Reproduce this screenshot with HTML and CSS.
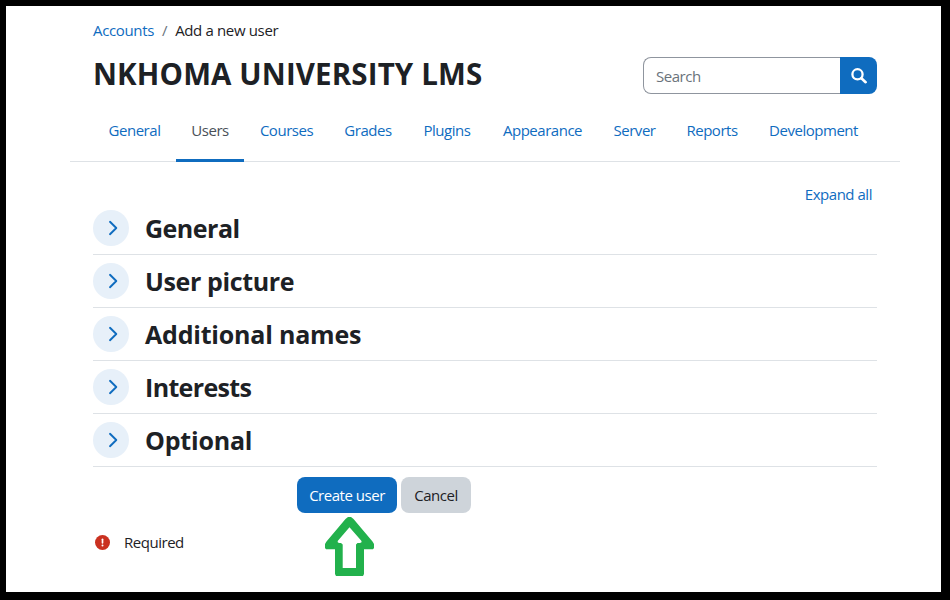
FILE: index.html
```html
<!DOCTYPE html>
<html lang="en">
<head>
<meta charset="utf-8">
<title>Add a new user</title>
<link rel="stylesheet" href="styles.css">
</head>
<body>
<main class="page">
  <nav class="breadcrumb"><a class="crumb-link">Accounts</a><span class="slash">/</span><span class="crumb-current">Add a new user</span></nav>
  <header class="header">
    <h1>NKHOMA UNIVERSITY LMS</h1>
    <div class="search">
      <div class="search-field"><span>Search</span></div>
      <button class="search-button" aria-label="Search"><svg width="16" height="16" viewBox="0 0 16 16"><circle cx="6.5" cy="6.3" r="5.1" fill="none" stroke="#fff" stroke-width="2.3"/><path d="M10.4 10.2L14.6 14.2" stroke="#fff" stroke-width="2.6" stroke-linecap="round"/></svg></button>
    </div>
  </header>
  <nav class="tabs">
    <a class="tab t-general"><span>General</span></a>
    <a class="tab t-users active"><span>Users</span></a>
    <a class="tab t-courses"><span>Courses</span></a>
    <a class="tab t-grades"><span>Grades</span></a>
    <a class="tab t-plugins"><span>Plugins</span></a>
    <a class="tab t-appearance"><span>Appearance</span></a>
    <a class="tab t-server"><span>Server</span></a>
    <a class="tab t-reports"><span>Reports</span></a>
    <a class="tab t-development"><span>Development</span></a>
  </nav>
  <div class="expand"><a>Expand all</a></div>
  <section class="row"><span class="toggle"><svg width="36" height="36"><path d="M17 11.8L23.3 18L17 24.2"/></svg></span><h3 class="h-general">General</h3></section>
  <section class="row"><span class="toggle"><svg width="36" height="36"><path d="M17 11.8L23.3 18L17 24.2"/></svg></span><h3 class="h-picture">User picture</h3></section>
  <section class="row"><span class="toggle"><svg width="36" height="36"><path d="M17 11.8L23.3 18L17 24.2"/></svg></span><h3 class="h-names">Additional names</h3></section>
  <section class="row"><span class="toggle"><svg width="36" height="36"><path d="M17 11.8L23.3 18L17 24.2"/></svg></span><h3 class="h-interests">Interests</h3></section>
  <section class="row"><span class="toggle"><svg width="36" height="36"><path d="M17 11.8L23.3 18L17 24.2"/></svg></span><h3 class="h-optional">Optional</h3></section>
  <div class="actions">
    <button class="btn primary">Create user</button>
    <button class="btn secondary">Cancel</button>
    <svg class="arrow" width="50" height="60" viewBox="0 0 50 60"><path d="M23 0H26L28.500 2L47.500 24.500L49 27V31L48 32.300H39V57L38 59H11L10 57V32.300H1L0 31V27L1.500 24.500L20.500 2ZM24.500 10.300L12.700 24V25.300L14 26H16L17.700 27.500V51H31V27.500L32.500 26H35L36.500 25.300V24Z" fill="#22b14c" fill-rule="evenodd"/></svg>
  </div>
  <div class="required"><svg width="15" height="15" viewBox="0 0 15 15"><circle cx="7.5" cy="7.5" r="7.5" fill="#ca3120"/><path d="M7.5 4.3V7.8" stroke="#fff" stroke-width="1.7" stroke-linecap="round"/><circle cx="7.5" cy="10.5" r="1" fill="#fff"/></svg><span>Required</span></div>
</main>
</body>
</html>
```

FILE: styles.css
```css
* { box-sizing: border-box; }
body {
  margin: 0;
  width: 950px;
  height: 600px;
  overflow: hidden;
  background: #000;
  padding: 6px 9px 8px 6px;
  font-family: "Open Sans", "Noto Sans", sans-serif;
  font-size: 15px;
  letter-spacing: -0.47px;
  line-height: 24px;
  color: #1d2125;
}
.page { height: 586px; background: #fff; padding: 12px 64px 0 87px; }
a { color: #0f6cbf; }
.breadcrumb { height: 25px; display: flex; white-space: nowrap; letter-spacing: -0.35px; }
.slash { color: #6a737b; margin: 0 8px; }
.header { display: flex; justify-content: space-between; height: 62px; }
h1 { margin: 13px 0 0; font-size: 29.5px; line-height: 36px; font-weight: 700; white-space: nowrap; letter-spacing: 0.13px; }
.search { display: flex; width: 234px; height: 37px; margin-top: 14px; }
.search-field {
  flex: 1;
  border: 1px solid #8f959e;
  border-right: 0;
  border-radius: 8px 0 0 8px;
  padding: 6px 12px;
  color: #6a737b;
}
.search-button {
  width: 37px;
  border: 0;
  border-radius: 0 8px 8px 0;
  background: #0f6cbf;
  padding: 0;
  display: flex;
  align-items: center;
  justify-content: center;
}
.tabs {
  display: flex;
  margin: 0 -23px;
  padding-left: 23px;
  height: 57px;
  border-bottom: 1px solid #dee2e6;
}
.tab {
  display: flex;
  justify-content: center;
  height: 57px;
  padding-top: 13px;
  white-space: nowrap;
}
.active { color: #495057; border-bottom: 3px solid #0f6cbf; }
.t-general { width: 83px; }
.t-users { width: 68px; }
.t-courses { width: 85px; }
.t-grades { width: 78px; }
.t-plugins { width: 80px; }
.t-appearance { width: 111px; }
.t-server { width: 73px; }
.t-reports { width: 82px; }
.t-development { width: 121px; }
.expand { height: 42px; padding: 20px 5px 0 0; text-align: right; }
.row {
  height: 53px;
  border-bottom: 1px solid #dee2e6;
  display: flex;
  gap: 16px;
  padding-top: 8px;
}
.row:first-of-type { height: 51px; padding-top: 6px; }
.toggle { width: 36px; height: 36px; border-radius: 50%; background: #e7f0f9; }
.toggle svg { display: block; fill: none; stroke: #0f6cbf; stroke-width: 1.9; stroke-linecap: round; stroke-linejoin: round; }
h3 { margin: 0; font-size: 25px; line-height: 37px; font-weight: 700; letter-spacing: -0.2px; }
.h-general { letter-spacing: -0.5px; }
.h-picture { letter-spacing: -0.38px; }
.h-interests { letter-spacing: -0.65px; }
.actions { position: relative; display: flex; gap: 4px; padding: 10px 0 0 204px; }
.btn {
  height: 36px;
  border: 0;
  border-radius: 8px;
  padding: 0;
  font: inherit;
  letter-spacing: inherit;
  white-space: nowrap;
}
.primary { width: 100px; background: #0f6cbf; color: #fff; }
.secondary { width: 70px; background: #ced4da; color: #1d2125; }
.arrow { position: absolute; left: 232px; top: 50px; }
.required { display: flex; align-items: center; gap: 14px; padding-left: 2px; margin-top: 17px; }
```
